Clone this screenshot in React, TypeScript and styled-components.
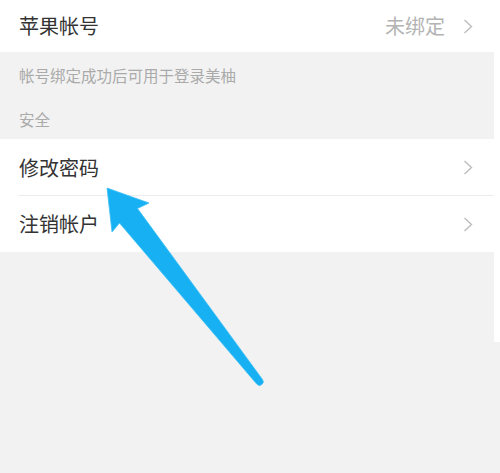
import styled, { createGlobalStyle } from "styled-components";

const GlobalStyle = createGlobalStyle`
  html, body {
    margin: 0;
    padding: 0;
    background: #f2f2f2;
  }
  body {
    font-family: "Noto Sans CJK SC", "Noto Sans", sans-serif;
  }
`;

const Page = styled.div`
  position: relative;
  width: 500px;
  height: 473px;
  display: flex;
  overflow: hidden;
`;

const Main = styled.div`
  flex: 1;
  display: flex;
  flex-direction: column;
  background: #f2f2f2;
`;

const EdgeStrip = styled.div`
  width: 6px;
  height: 342px;
  background: #ffffff;
`;

const Row = styled.div<{ $h: number; $divider?: boolean }>`
  height: ${(p) => p.$h}px;
  background: #ffffff;
  display: flex;
  align-items: center;
  padding: 0 0 0 19px;
  position: relative;
  ${(p) =>
    p.$divider &&
    `
    &::after {
      content: "";
      position: absolute;
      left: 18px;
      right: 0;
      bottom: 0;
      height: 1px;
      background: #ececec;
    }
  `}
`;

const Title = styled.span`
  flex: 1;
  font-size: 20px;
  color: #333333;
  line-height: 1;
`;

const Value = styled.span`
  font-size: 20px;
  color: #b3b3b3;
  line-height: 1;
  margin-right: 18px;
`;

const Chevron = styled.svg`
  width: 10px;
  height: 15px;
  margin-right: 21px;
  flex-shrink: 0;
`;

const Caption = styled.div<{ $h: number }>`
  height: ${(p) => p.$h}px;
  display: flex;
  align-items: center;
  padding-left: 19px;
  font-size: 15.5px;
  color: #aaaaaa;
  line-height: 1;
`;

const Arrow = styled.svg`
  position: absolute;
  left: 0;
  top: 0;
  width: 500px;
  height: 473px;
  pointer-events: none;
`;

const Arrowhead = () => (
  <Chevron viewBox="0 0 10 15">
    <path d="M1.5 1 L8.5 7.5 L1.5 14" fill="none" stroke="#bdbdbd" strokeWidth="1.4" />
  </Chevron>
);

export default function App() {
  return (
    <>
      <GlobalStyle />
      <Page>
        <Main>
          <Row $h={52}>
            <Title>苹果帐号</Title>
            <Value>未绑定</Value>
            <Arrowhead />
          </Row>
          <Caption $h={48}>帐号绑定成功后可用于登录美柚</Caption>
          <Caption $h={39}>安全</Caption>
          <Row $h={57} $divider>
            <Title>修改密码</Title>
            <Arrowhead />
          </Row>
          <Row $h={56}>
            <Title>注销帐户</Title>
            <Arrowhead />
          </Row>
        </Main>
        <EdgeStrip />
        <Arrow viewBox="0 0 500 473">
          <path
            d="M107 188 L149 203 L137.5 208.5 L262.5 379.5 A3.6 3.6 0 0 1 256.5 383.8 L119.5 223 L112 232 Z"
            fill="#17b0f3"
            stroke="#3cc0f5"
            strokeWidth="0.8"
            strokeLinejoin="round"
          />
        </Arrow>
      </Page>
    </>
  );
}
